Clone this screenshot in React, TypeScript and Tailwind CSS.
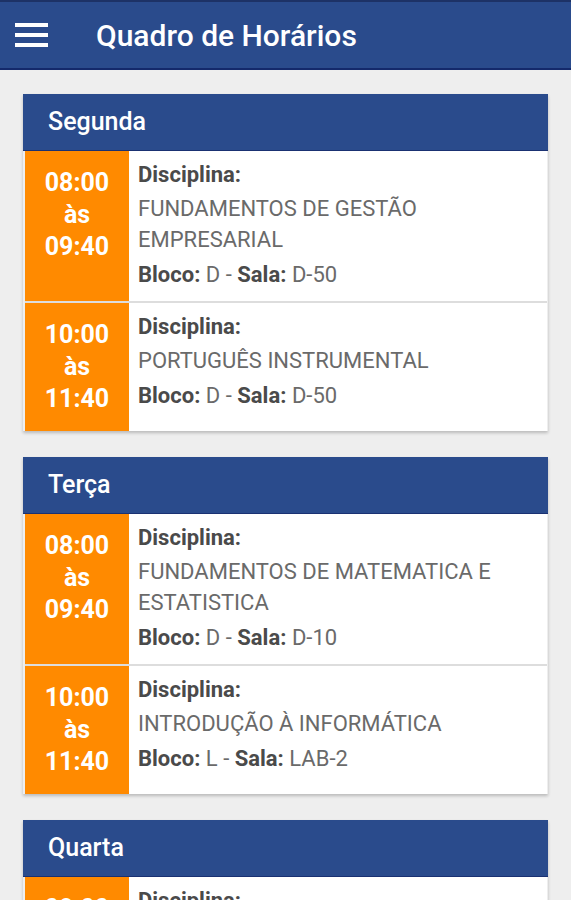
import React from "react";

type Aula = {
  inicio: string;
  fim: string;
  disciplina: string;
  bloco: string;
  sala: string;
};

type Dia = {
  nome: string;
  aulas: Aula[];
};

const dias: Dia[] = [
  {
    nome: "Segunda",
    aulas: [
      { inicio: "08:00", fim: "09:40", disciplina: "FUNDAMENTOS DE GESTÃO EMPRESARIAL", bloco: "D", sala: "D-50" },
      { inicio: "10:00", fim: "11:40", disciplina: "PORTUGUÊS INSTRUMENTAL", bloco: "D", sala: "D-50" },
    ],
  },
  {
    nome: "Terça",
    aulas: [
      { inicio: "08:00", fim: "09:40", disciplina: "FUNDAMENTOS DE MATEMATICA E ESTATISTICA", bloco: "D", sala: "D-10" },
      { inicio: "10:00", fim: "11:40", disciplina: "INTRODUÇÃO À INFORMÁTICA", bloco: "L", sala: "LAB-2" },
    ],
  },
  {
    nome: "Quarta",
    aulas: [
      { inicio: "08:00", fim: "09:40", disciplina: "ALGORITMOS E PROGRAMAÇÃO", bloco: "D", sala: "D-50" },
    ],
  },
];

function AulaRow({ aula }: { aula: Aula }) {
  return (
    <div className="flex bg-white">
      {/* horario */}
      <div className="w-[104px] shrink-0 bg-[#ff8a00] py-4 text-center text-[25px] font-bold leading-[32px] text-white">
        <div>{aula.inicio}</div>
        <div>às</div>
        <div>{aula.fim}</div>
      </div>
      {/* info */}
      <div className="flex-1 pl-[9px] pr-3 pt-2 pb-[10px] text-[22px] text-[#6a6a6a]">
        <div className="mb-[2px] font-bold leading-[32px] text-[#4a4a4a]">Disciplina:</div>
        <div className="leading-[31px]">{aula.disciplina}</div>
        <div className="mt-[4px] leading-[32px]">
          <span className="font-bold text-[#4a4a4a]">Bloco:</span> {aula.bloco}{" "}
          - <span className="font-bold text-[#4a4a4a]">Sala:</span> {aula.sala}
        </div>
      </div>
    </div>
  );
}

export default function App() {
  return (
    <div className="h-[900px] overflow-hidden bg-[#eeeeee] font-['Roboto',sans-serif]">
      {/* app bar */}
      <header className="flex h-[70px] items-center border-t-2 border-b-2 border-t-[#1d3266] border-b-[#14296b] bg-[#2a4b8c]">
        <div className="ml-[15px] flex w-[33px] flex-col gap-[6px]">
          <span className="h-[4px] bg-white" />
          <span className="h-[4px] bg-white" />
          <span className="h-[4px] bg-white" />
        </div>
        <h1 className="ml-[48px] text-[30px] font-medium text-white">Quadro de Horários</h1>
      </header>

      {/* dias */}
      <main className="flex flex-col gap-[26px] px-[23px] pt-[24px]">
        {dias.map((dia) => (
          <section key={dia.nome} className="shadow-[0_2px_3px_rgba(0,0,0,0.22)]">
            <div className="flex h-[57px] items-center border-b border-[#1a3172] bg-[#2a4b8c] pl-[25px] text-[25px] font-medium text-white">
              {dia.nome}
            </div>
            <div className="ml-[2px] mr-[1px] flex flex-col gap-[2px] bg-[#dddddd]">
              {dia.aulas.map((aula, i) => (
                <AulaRow key={i} aula={aula} />
              ))}
            </div>
          </section>
        ))}
      </main>
    </div>
  );
}
